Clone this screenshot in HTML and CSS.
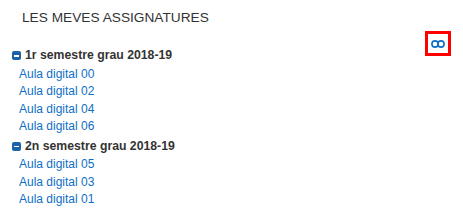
FILE: index.html
```html
<!DOCTYPE html>
<html>
<head>
<meta charset="utf-8">
<link rel="stylesheet" href="styles.css">
</head>
<body>
<div class="block">
  <div class="content">
    <h2 class="title">LES MEVES ASSIGNATURES</h2>
    <ul class="groups">
      <li class="group">
        <div class="group-head"><span class="minus"></span>1r semestre grau 2018-19</div>
        <ul class="courses">
          <li><a href="#">Aula digital 00</a></li>
          <li><a href="#">Aula digital 02</a></li>
          <li><a href="#">Aula digital 04</a></li>
          <li><a href="#">Aula digital 06</a></li>
        </ul>
      </li>
      <li class="group">
        <div class="group-head"><span class="minus"></span>2n semestre grau 2018-19</div>
        <ul class="courses">
          <li><a href="#">Aula digital 05</a></li>
          <li><a href="#">Aula digital 03</a></li>
          <li><a href="#">Aula digital 01</a></li>
        </ul>
      </li>
    </ul>
  </div>
  <div class="actions">
    <span class="toggle">
      <svg width="14" height="8" viewBox="0 0 14 8"><circle cx="4" cy="4" r="3.1" fill="none" stroke="#0f6fc5" stroke-width="1.6"/><circle cx="10" cy="4" r="3.1" fill="none" stroke="#0f6fc5" stroke-width="1.6"/></svg>
    </span>
  </div>
</div>
</body>
</html>
```
FILE: styles.css
```css
html, body { margin: 0; padding: 0; background: #fff; }
body { font-family: "Liberation Sans", Arial, sans-serif; color: #333; }
.block { display: flex; padding: 8px 12px 0 12px; }
.content { flex: 1; }
.title { margin: 0 0 18px 10px; font-size: 13.7px; font-weight: normal; line-height: 20px; color: #333; }
.actions { padding-top: 23px; }
.toggle { box-sizing: border-box; width: 26px; height: 25px; border: 3px solid #f00; display: flex; align-items: center; justify-content: center; }
.groups { list-style: none; margin: 0; padding: 0; }
.group { margin-bottom: 0.7px; }
.group-head { font-size: 12.25px; font-weight: bold; line-height: 19.6px; display: flex; align-items: center; color: #333; }
.minus { width: 9px; height: 9px; background: #1d62a8; border-radius: 2px; margin-right: 4px; position: relative; }
.minus::after { content: ""; position: absolute; left: 2px; right: 2px; top: 4px; height: 1.3px; background: #fff; }
.courses { list-style: none; margin: 0; padding: 0 0 0 7px; }
.courses li { font-size: 12px; line-height: 17.6px; }
.courses a { color: #0f6fc5; text-decoration: none; }
```
